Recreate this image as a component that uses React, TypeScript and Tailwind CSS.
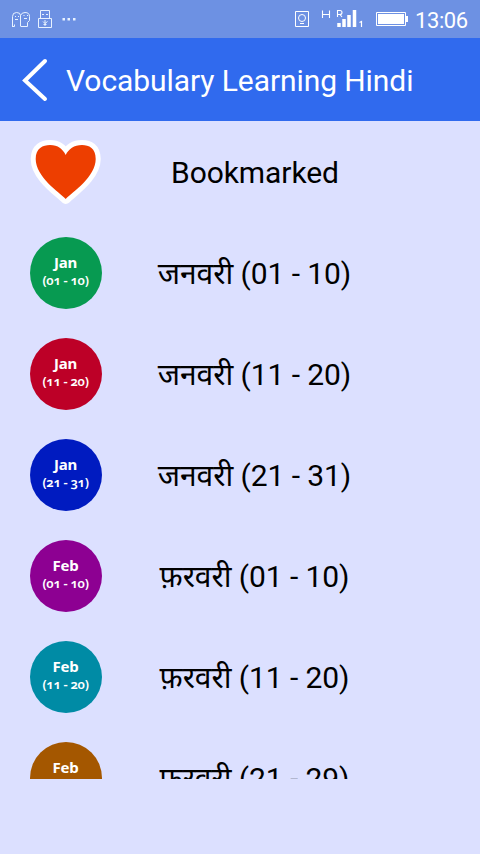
type Entry = { month: string; days: string; label: string; color: string };

const entries: Entry[] = [
  { month: 'Jan', days: '(01 - 10)', label: 'जनवरी (01 - 10)', color: 'bg-[#079a51]' },
  { month: 'Jan', days: '(11 - 20)', label: 'जनवरी (11 - 20)', color: 'bg-[#bd0027]' },
  { month: 'Jan', days: '(21 - 31)', label: 'जनवरी (21 - 31)', color: 'bg-[#001bc0]' },
  { month: 'Feb', days: '(01 - 10)', label: 'फ़रवरी (01 - 10)', color: 'bg-[#8d0092]' },
  { month: 'Feb', days: '(11 - 20)', label: 'फ़रवरी (11 - 20)', color: 'bg-[#008ba5]' },
  { month: 'Feb', days: '(21 - 29)', label: 'फ़रवरी (21 - 29)', color: 'bg-[#a45700]' },
];

function StatusBar() {
  return (
    <header className="flex h-[38px] shrink-0 items-center bg-[#6d91e3] text-white">
      <svg width="90" height="38" viewBox="0 0 90 38" fill="none" stroke="#e8f2ff" strokeWidth="1">
        <path d="M12.500 27V16.500Q12.500 12.500 16.500 12.500Q20.500 12.500 20.500 15.500M12.500 26.500H14.500V24.500M20.500 26.500V15.500Q21.500 12.500 25 12.500Q29.500 12.500 29.500 16.500V20.500L27.500 22.500V26.500H21M15 16.500H16M18 16.500H19M23.500 15.500H24.500M27 15.500H28M15 19.500H18M24 18.500H27" />
        <path d="M40.500 18V10.500H49.500V18M38.500 18.500H51.500V27.500H38.500ZM42 14.500H44M46 14.500H48M45 20V26M43 21.500L45 23.500L47.500 21.500M43.500 24.500H46.500" />
        <g fill="#e8f2ff" stroke="none">
          <rect x="62.500" y="18" width="2.500" height="2.500" />
          <rect x="67.500" y="18" width="2.500" height="2.500" />
          <rect x="73" y="18" width="2.500" height="2.500" />
        </g>
      </svg>
      <svg className="ml-auto" width="125" height="38" viewBox="290 0 125 38" fill="none" stroke="white">
        <path d="M295.500 11.500H308.500V26.500H295.500ZM300 23.500H304" />
        <circle cx="302" cy="18" r="3.500" />
        <path d="M322.500 10.500V18M329.500 10.500V18M323 14.500H329M337.500 17V10.500H340Q342 10.500 342 12.500T340 14.500H338M340 14.500L342 17" strokeWidth="1.100" />
        <path d="M339 23V27M344 19V27M349 15V27M354.500 10V27" strokeWidth="3.500" />
        <path d="M359.500 22.500L361.500 21.500V27" strokeWidth="1.200" />
        <path d="M376.500 12.500H405.500V25.500H376.500Z" />
        <path d="M378 14H404V24H378ZM406 16H408V22H406Z" fill="white" stroke="none" />
      </svg>
      <time className="w-[65px] pt-[3px] font-[Roboto,sans-serif] text-[22px] leading-[35px] tracking-[-0.4px]">13:06</time>
    </header>
  );
}

function MonthBadge({ month, days, color }: Entry) {
  return (
    <div className={`h-[72px] w-[72px] rounded-full pt-[16px] pr-px text-center font-['Noto_Sans',sans-serif] text-white ${color}`}>
      <div className="text-[15px] leading-[18px] font-bold tracking-[-0.2px]">{month}</div>
      <div className="text-[13px] leading-[18px] font-semibold tracking-[-0.3px] whitespace-nowrap oldstyle-nums">{days}</div>
    </div>
  );
}

export default function App() {
  return (
    <div className="flex h-[854px] w-[480px] flex-col overflow-hidden bg-[#dce0ff]">
      <StatusBar />
      <div className="flex h-[83px] shrink-0 items-center bg-[#306aee] pl-[22px] text-white">
        <svg width="26" height="44" viewBox="0 0 26 44" fill="none" stroke="white" strokeWidth="4" strokeLinecap="round">
          <path d="M23 3L3 22.500L23 41" />
        </svg>
        <h1 className="ml-[18px] pt-[2px] font-[Roboto,sans-serif] text-[30px] leading-[40px] tracking-[-0.08px] whitespace-nowrap">Vocabulary Learning Hindi</h1>
      </div>
      <main className="h-[658px] shrink-0 overflow-hidden font-[Roboto,'Noto_Sans',sans-serif] text-[30px] leading-[40px] tracking-[-0.08px] text-black">
        <div className="flex h-[101px] items-center pt-px pl-[30px]">
          <svg width="72" height="72" viewBox="0 0 72 72" strokeLinejoin="round">
            <path
              d="M35.700 63C29 56 5.700 41 5.700 23C5.700 12 13 9 20 9C28 9 32.700 13 35.700 19C38.700 13 44 9 52 9C59 9 65.700 12 65.700 23C65.700 41 42.500 56 35.700 63Z"
              fill="#ed3e00" stroke="white" strokeWidth="10" paintOrder="stroke"
            />
          </svg>
          <div className="w-[306px] pt-[2px] text-center">Bookmarked</div>
        </div>
        {entries.map((entry) => (
          <div key={entry.label} className="flex h-[101px] items-center pt-px pl-[30px]">
            <MonthBadge {...entry} />
            <div className="w-[305px] pt-[2px] text-center whitespace-nowrap">{entry.label}</div>
          </div>
        ))}
      </main>
    </div>
  );
}
